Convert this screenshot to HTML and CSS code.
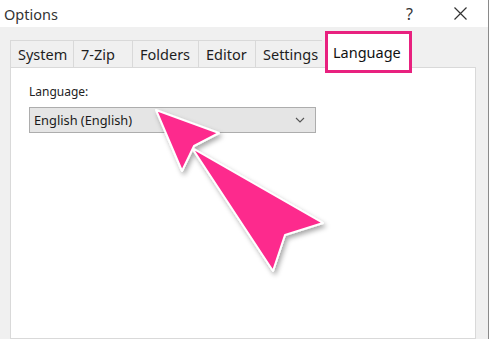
FILE: index.html
```html
<!DOCTYPE html>
<html lang="en">
<head>
    <meta charset="UTF-8">
    <title>Options</title>
    <link rel="stylesheet" href="styles.css">
</head>
<body>

    <div class="window">
        <div class="titlebar">
            <span class="title">Options</span>
            <span class="help">?</span>
            <span class="close">
                <svg width="13" height="13" viewBox="0 0 13 13"><path d="M0.5 0.5L12.5 12.5M12.5 0.5L0.5 12.5" stroke="#333" stroke-width="1.2" fill="none"/></svg>
            </span>
        </div>

        <div class="body">
            <div class="tabs">
                <div class="tab">System</div>
                <div class="tab">7-Zip</div>
                <div class="tab">Folders</div>
                <div class="tab">Editor</div>
                <div class="tab">Settings</div>
                <div class="spacer"></div>
                <div class="tab active">Language</div>
            </div>

            <div class="panel">
                <label class="field-label">Language:</label>
                <div class="select">
                    <span>English (English)</span>
                    <svg width="10" height="6" viewBox="0 0 10 6"><path d="M1 1L5 5L9 1" stroke="#555" stroke-width="1.1" fill="none"/></svg>
                </div>
            </div>
        </div>

        <!-- annotation arrow drawn over the dialog -->
        <svg class="pointer" width="492" height="339" viewBox="0 0 492 339">
            <defs>
                <filter id="shadow" x="-20%" y="-20%" width="140%" height="140%">
                    <feDropShadow dx="2" dy="3" stdDeviation="2.5" flood-color="#000" flood-opacity="0.35"/>
                </filter>
            </defs>
            <g filter="url(#shadow)" fill="#fd2a8d" stroke="#fff" stroke-width="2" stroke-linejoin="round">
                <polygon points="192,148 323,223 285,235 273,271"/>
                <polygon points="156,110 219,133 194,146 182,171"/>
            </g>
        </svg>
    </div>

</body>
</html>
```

FILE: styles.css
```css
body {
    margin: 0;
    font-family: "Noto Sans", "Open Sans", sans-serif;
    color: #1a1a1a;
    overflow: hidden;
}

.window {
    position: relative;
    display: flex;
    flex-direction: column;
    width: 488px;
    height: 339px;
    overflow: hidden;
    border-right: 1px solid #8a8a8a;
    background: #f0f0f0;
}

.titlebar {
    display: flex;
    align-items: center;
    height: 27px;
    flex-shrink: 0;
    background: #fff;
}

.title {
    flex: 1;
    padding-left: 4px;
    font-size: 14.5px;
    color: #333;
}

.help {
    width: 48px;
    font-size: 16px;
    color: #333;
}

.close {
    display: flex;
    width: 34px;
}

.body {
    display: flex;
    flex-direction: column;
    flex: 1;
    min-height: 0;
    padding: 13px 12px 0 10px;
}

.tabs {
    display: grid;
    grid-template-columns: 63px 59px 66px 57px 67px 3px 87px;
    grid-template-rows: 27px;
    align-items: end;
}

.tab {
    height: 27px;
    padding-left: 7px;
    border: 1px solid #d9d9d9;
    border-bottom: none;
    border-right: none;
    font-size: 14.5px;
    line-height: 26px;
    color: #1e1e1e;
    box-sizing: border-box;
}

.tab.active {
    position: relative;
    z-index: 2;
    height: 42px;
    margin-bottom: -6px;
    padding-left: 5px;
    background: #fff;
    border: 3px solid #e8217f;
    line-height: 36px;
    color: #111;
}

.panel {
    flex: 1;
    padding: 15px 18px;
    background: #fff;
    border: 1px solid #d9d9d9;
}

.field-label {
    display: block;
    font-size: 12px;
    color: #222;
}

.select {
    display: flex;
    align-items: center;
    justify-content: space-between;
    width: 287px;
    height: 26px;
    margin-top: 7px;
    padding: 0 10px 0 4px;
    box-sizing: border-box;
    background: #e5e5e5;
    border: 1px solid #adadad;
    font-size: 12.8px;
}

.pointer {
    position: absolute;
    left: 0;
    top: 0;
    pointer-events: none;
}
```
